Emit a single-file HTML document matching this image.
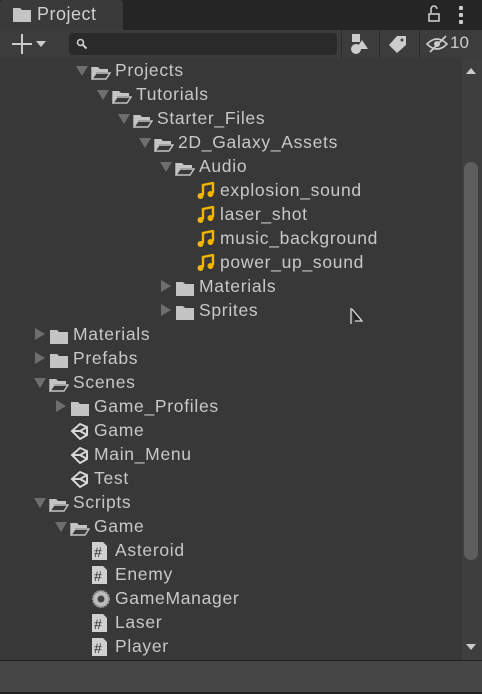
<!DOCTYPE html><html><head><style>
body{margin:0;width:482px;height:694px;background:#383838;font-family:"Liberation Sans",sans-serif;color:#c8c8c8;position:relative;overflow:hidden}
.a{position:absolute}
.row{position:absolute;height:24px;line-height:24px;font-size:17.5px;letter-spacing:0.7px;white-space:nowrap}
.tri{position:absolute;top:7px;width:0;height:0}
.down{border-left:6px solid transparent;border-right:6px solid transparent;border-top:10px solid #6e6e6e}
.right{border-top:6px solid transparent;border-bottom:6px solid transparent;border-left:10px solid #6e6e6e;top:6px}
.ic{position:absolute;top:4px}
</style></head><body>
<div class="a" style="left:0;top:0;width:482px;height:30px;background:#252525"></div>
<div class="a" style="left:0;top:0;width:123px;height:30px;background:#3a3a3a;border-radius:3px 3px 0 0"></div>
<svg class="a" style="left:12px;top:7px" width="20" height="16"><path d="M1 1h7l2 2h9v12H1z" fill="#c4c4c4"/></svg>
<div class="a" style="left:37px;top:4px;font-size:18px;color:#d0d0d0;letter-spacing:0.5px">Project</div>
<svg class="a" style="left:428px;top:5px" width="12" height="18"><path d="M3 8V4a3 3 0 0 1 6 0" stroke="#ccc" stroke-width="1.6" fill="none"/><rect x="1" y="9" width="10" height="7" fill="none" stroke="#ccc" stroke-width="1.6"/></svg>
<div class="a" style="left:459px;top:6px;width:4px;height:4px;background:#ccc;box-shadow:0 7px #ccc,0 14px #ccc;border-radius:1px"></div>
<div class="a" style="left:0;top:30px;width:482px;height:28px;background:#3c3c3c"></div>
<div class="a" style="left:12px;top:43px;width:20px;height:2px;background:#ccc"></div>
<div class="a" style="left:21px;top:34px;width:2px;height:20px;background:#ccc"></div>
<div class="a" style="left:36px;top:41px;border-left:5px solid transparent;border-right:5px solid transparent;border-top:6px solid #ccc"></div>
<div class="a" style="left:69px;top:33px;width:268px;height:22px;background:#2a2a2a;border-radius:4px"></div>
<svg class="a" style="left:76px;top:38px" width="12" height="12"><circle cx="4.5" cy="4.5" r="3" stroke="#ccc" stroke-width="1.6" fill="none"/><path d="M7 7l3.5 3.5" stroke="#ccc" stroke-width="2"/></svg>
<div class="a" style="left:341px;top:30px;width:1px;height:28px;background:#2a2a2a"></div>
<div class="a" style="left:379px;top:30px;width:1px;height:28px;background:#2a2a2a"></div>
<div class="a" style="left:419px;top:30px;width:1px;height:28px;background:#2a2a2a"></div>
<svg class="a" style="left:350px;top:33px" width="22" height="22"><rect x="2" y="1" width="8" height="8" fill="#ccc"/><path d="M12 7l6 9h-12z" fill="#ccc"/><circle cx="6" cy="16" r="5" fill="#ccc"/></svg>
<svg class="a" style="left:388px;top:35px" width="20" height="18"><path d="M9 1h9v9l-9 8-8-8z" fill="#ccc"/><circle cx="14" cy="5" r="1.5" fill="#3c3c3c"/></svg>
<svg class="a" style="left:426px;top:35px" width="24" height="18"><path d="M1 9q10-10 20 0q-10 10-20 0z" stroke="#ccc" stroke-width="1.6" fill="none"/><circle cx="11" cy="9" r="3" fill="#ccc"/><path d="M4 17L20 1" stroke="#ccc" stroke-width="1.8"/></svg>
<div class="a" style="left:450px;top:33px;font-size:17px;color:#ccc">10</div>
<div class="a" style="left:462px;top:58px;width:20px;height:602px;background:#3e3e3e"></div>
<div class="a" style="left:466px;top:68px;border-left:5px solid transparent;border-right:5px solid transparent;border-bottom:6px solid #ccc"></div>
<div class="a" style="left:466px;top:644px;border-left:5px solid transparent;border-right:5px solid transparent;border-top:6px solid #ccc"></div>
<div class="a" style="left:464px;top:162px;width:14px;height:398px;background:#5e5e5e;border-radius:7px"></div>
<div class="a" style="left:0;top:660px;width:482px;height:32px;background:#464646;border-top:1px solid #222"></div>
<div class="a" style="left:0;top:692px;width:482px;height:2px;background:#1e1e1e"></div>
<svg class="a" style="left:350px;top:307px" width="14" height="20"><path d="M1 1v16M2 2l10 12H5" stroke="#ddd" stroke-width="1.3" fill="#222"/></svg>
<div id="t"></div>
<script>
var rows=[
[2,'d','fo','Projects'],[3,'d','fo','Tutorials'],[4,'d','fo','Starter_Files'],[5,'d','fo','2D_Galaxy_Assets'],[6,'d','fo','Audio'],
[7,'','au','explosion_sound'],[7,'','au','laser_shot'],[7,'','au','music_background'],[7,'','au','power_up_sound'],
[6,'r','fc','Materials'],[6,'r','fc','Sprites'],
[0,'r','fc','Materials'],[0,'r','fc','Prefabs'],[0,'d','fo','Scenes'],[1,'r','fc','Game_Profiles'],
[1,'','un','Game'],[1,'','un','Main_Menu'],[1,'','un','Test'],
[0,'d','fo','Scripts'],[1,'d','fo','Game'],
[2,'','cs','Asteroid'],[2,'','cs','Enemy'],[2,'','gm','GameManager'],[2,'','cs','Laser'],[2,'','cs','Player']];
var ic={
fo:'<svg width="20" height="16"><path d="M1 3h6l2 2h8v3H5L1 14z" fill="#c4c4c4"/><path d="M5 9h14l-4 6H1z" fill="none" stroke="#c4c4c4" stroke-width="1.4"/><path d="M1 3v12" stroke="#c4c4c4" stroke-width="1.4"/></svg>',
fc:'<svg width="20" height="16"><path d="M1 2h7l2 2h9v12H1z" fill="#c4c4c4"/></svg>',
au:'<svg width="20" height="18"><path d="M7 13V3l10-2v10" stroke="#f4b400" stroke-width="2.4" fill="none"/><circle cx="4.5" cy="14" r="3" fill="#f4b400"/><circle cx="14.5" cy="12" r="3" fill="#f4b400"/></svg>',
un:'<svg width="20" height="18"><path d="M2 9L10 2l7 3v8l-7 4z" fill="none" stroke="#d6d6d6" stroke-width="2"/><path d="M2 9h8l7-4M10 9l7 4" stroke="#d6d6d6" stroke-width="2" fill="none"/></svg>',
cs:'<svg width="18" height="18"><path d="M1 0h11l4 4v14H1z" fill="#d0d0d0"/><text x="3" y="15" font-size="14" font-family="Liberation Sans" fill="#333">#</text></svg>',
gm:'<svg width="20" height="18"><circle cx="10" cy="9" r="8" fill="#bdbdbd" stroke="#999" stroke-dasharray="2 1" stroke-width="2"/><circle cx="10" cy="9" r="3.5" fill="#444"/></svg>'};
var h='';
rows.forEach(function(r,i){var y=58+24*i;var L=r[0];var ax=34+21*L;var ix=ax+15;var tx=ax+39;
h+='<div class="row" style="top:'+y+'px;left:0;width:460px">';
if(r[1]=='d')h+='<div class="tri down" style="left:'+ax+'px;top:8px"></div>';
if(r[1]=='r')h+='<div class="tri right" style="left:'+(ax+1)+'px"></div>';
h+='<div class="ic" style="left:'+ix+'px;top:4px">'+ic[r[2]]+'</div>';
h+='<div class="a" style="left:'+tx+'px;top:0">'+r[3]+'</div></div>';});
document.getElementById('t').innerHTML=h;
</script>
</body></html>
